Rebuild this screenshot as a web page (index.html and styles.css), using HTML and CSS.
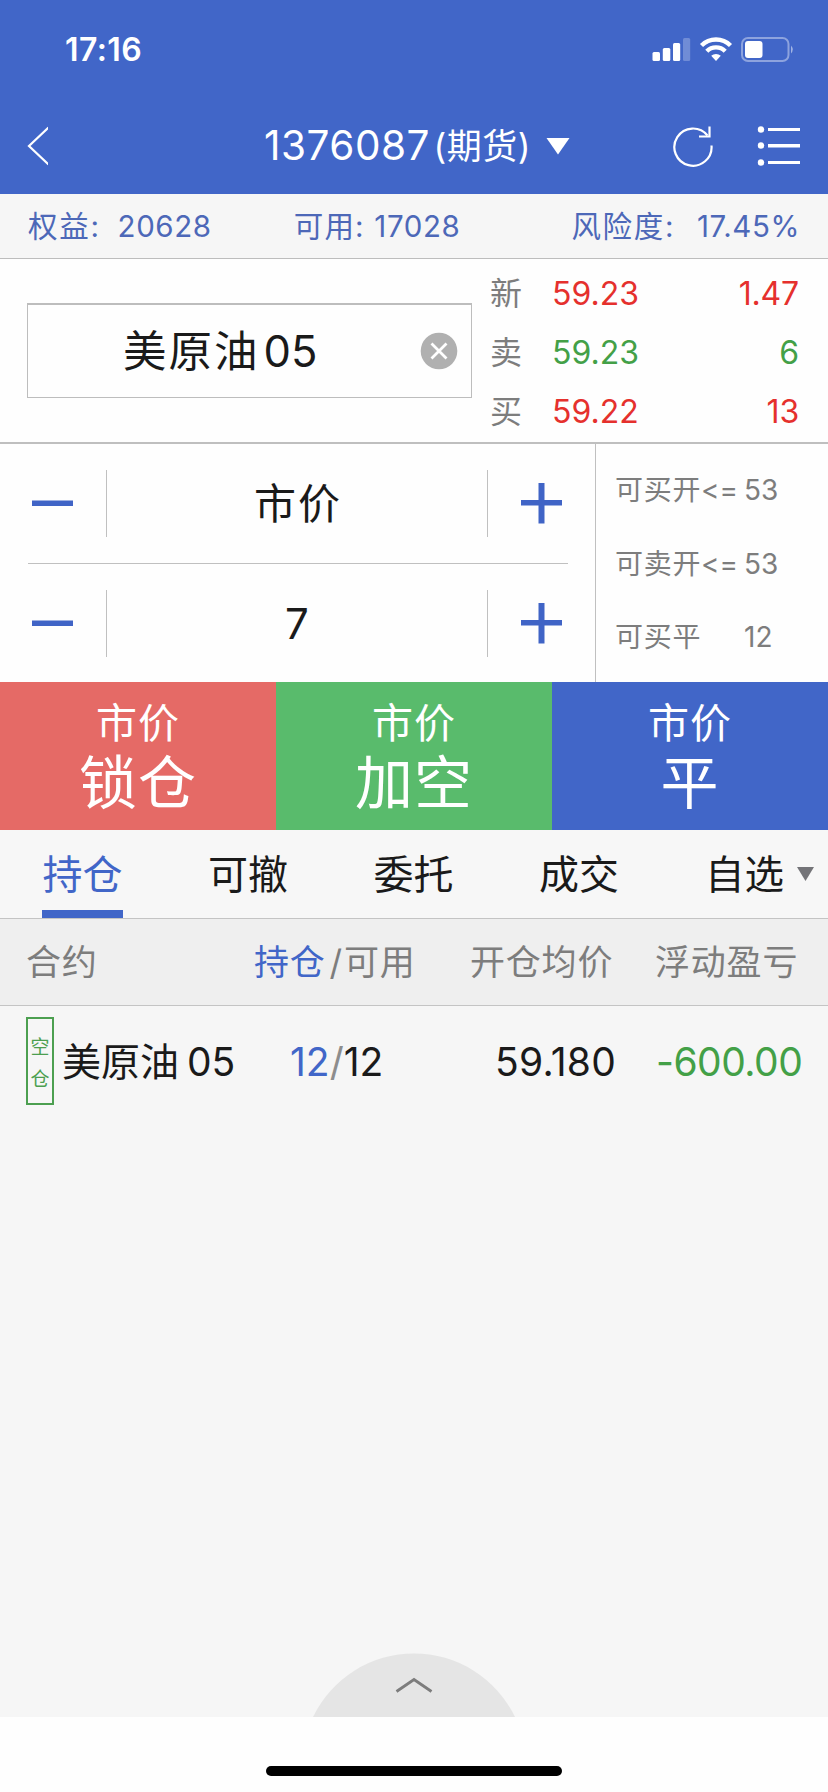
FILE: index.html
```html
<!DOCTYPE html>
<html lang="zh-CN">
<head>
<meta charset="utf-8">
<title>期货交易</title>
<link rel="stylesheet" href="styles.css">
</head>
<body>
<div class="app">
  <header class="header">
    <div class="status">
      <span class="clock">17:16</span>
      <svg class="status-icons" width="144" height="28" viewBox="0 0 144 28">
        <g fill="#fff">
          <rect x="2.5" y="16" width="7.5" height="9" rx="1.5"/>
          <rect x="12.8" y="12" width="7.5" height="13" rx="1.5"/>
          <rect x="23" y="7" width="7.2" height="18" rx="1.5"/>
          <rect x="33" y="2" width="7.2" height="23" rx="1.5" opacity=".25"/>
        </g>
        <g fill="none" stroke="#fff" stroke-width="4.4">
          <path d="M51.500 9.500A20.500 20.500 0 0 1 80.500 9.500"/>
          <path d="M56.800 15.200A13 13 0 0 1 75.200 15.200"/>
        </g>
        <path d="M61.200 19.800A7 7 0 0 1 70.800 19.800L66 25Z" fill="#fff"/>
        <rect x="92" y="2" width="46.500" height="23" rx="6" fill="none" stroke="#fff" stroke-opacity=".4" stroke-width="2"/>
        <rect x="95" y="5" width="17.500" height="17" rx="3" fill="#fff"/>
        <path d="M141 9.500Q144.500 13.500 141 17.500Z" fill="#fff" opacity=".5"/>
      </svg>
    </div>
    <div class="nav">
      <svg class="back" width="22" height="40" viewBox="0 0 22 40"><path d="M22.500 1.500L3 20L22.500 38.500" fill="none" stroke="#fff" stroke-width="2.200"/></svg>
      <div class="account"><span class="account-id">1376087</span><span class="account-type">(期货)</span></div>
      <svg class="caret" width="24" height="18" viewBox="0 0 24 18"><path d="M.5 1H23.500L12 17.500Z" fill="#fff"/></svg>
      <svg class="refresh" width="42" height="42" viewBox="0 0 42 42"><g fill="none" stroke="#fff" stroke-width="2.200"><path d="M39.500 20.500A18.600 18.600 0 1 1 35.500 10.500"/><path d="M37.500 1.500V11.500H27"/></g></svg>
      <svg class="list" width="44" height="42" viewBox="0 0 44 42"><g fill="#fff"><circle cx="5" cy="4.500" r="3.200"/><circle cx="5" cy="20.500" r="3.200"/><circle cx="5" cy="37.500" r="3.200"/><path d="M12 3H44V6H12zM12 19H44V22.500H12zM12 36H44V39H12z"/></g></svg>
    </div>
  </header>

  <section class="summary">
    <div class="equity"><span class="k">权益:</span><span class="v">20628</span></div>
    <div class="available"><span class="k">可用:</span><span class="v">17028</span></div>
    <div class="risk"><span class="k">风险度:</span><span class="v">17.45%</span></div>
  </section>

  <section class="quote">
    <div class="symbol">
      <span class="symbol-name"><span class="cn">美原油</span>05</span>
      <svg class="clear" width="38" height="38" viewBox="0 0 38 38"><circle cx="19" cy="19" r="18.300" fill="#b0b0b0"/><path d="M11.500 11.500L26.500 26.500M26.500 11.500L11.500 26.500" stroke="#fff" stroke-width="2.800"/></svg>
    </div>
    <div class="ticks">
      <span class="tick-label">新</span><span class="up">59.23</span><span class="vol up">1.47</span>
      <span class="tick-label">卖</span><span class="down">59.23</span><span class="vol down">6</span>
      <span class="tick-label">买</span><span class="up">59.22</span><span class="vol up">13</span>
    </div>
  </section>

  <section class="order">
    <div class="steppers">
      <div class="stepper">
        <svg class="minus" width="41" height="41" viewBox="0 0 41 41"><path d="M0 17.500H41V23H0z" fill="#4064c6"/></svg>
        <span class="value price-value">市价</span>
        <svg class="plus" width="41" height="41" viewBox="0 0 41 41"><path d="M0 17H41V22.500H0zM17.500 0H23.500V40.500H17.500z" fill="#4064c6"/></svg>
      </div>
      <div class="stepper">
        <svg class="minus" width="41" height="41" viewBox="0 0 41 41"><path d="M0 17.500H41V23H0z" fill="#4064c6"/></svg>
        <span class="value">7</span>
        <svg class="plus" width="41" height="41" viewBox="0 0 41 41"><path d="M0 17H41V22.500H0zM17.500 0H23.500V40.500H17.500z" fill="#4064c6"/></svg>
      </div>
    </div>
    <div class="limits">
      <div class="limit"><span class="cn">可买开</span><span class="op">&lt;=</span><span class="num">53</span></div>
      <div class="limit"><span class="cn">可卖开</span><span class="op">&lt;=</span><span class="num">53</span></div>
      <div class="limit"><span class="cn">可买平</span><span class="op"></span><span class="num">12</span></div>
    </div>
  </section>

  <section class="actions">
    <div class="action lock"><span class="action-price">市价</span><span class="action-name">锁仓</span></div>
    <div class="action short"><span class="action-price">市价</span><span class="action-name">加空</span></div>
    <div class="action close"><span class="action-price">市价</span><span class="action-name">平</span></div>
  </section>

  <nav class="tabs">
    <span class="tab active">持仓</span>
    <span class="tab">可撤</span>
    <span class="tab">委托</span>
    <span class="tab">成交</span>
    <span class="tab">自选</span>
    <svg class="tab-caret" width="17" height="14" viewBox="0 0 17 14"><path d="M0 0H17L8.500 14Z" fill="#747478"/></svg>
  </nav>

  <section class="head cols">
    <span class="c-name">合约</span>
    <span class="c-qty"><span class="blue">持仓</span><span class="slash">/</span>可用</span>
    <span class="c-avg">开仓均价</span>
    <span class="c-pnl">浮动盈亏</span>
  </section>

  <section class="positions">
    <div class="row cols">
      <span class="badge"><span>空</span><span>仓</span></span>
      <span class="c-name"><span class="cn">美原油</span>05</span>
      <span class="c-qty"><span class="blue">12</span><span class="slash">/</span>12</span>
      <span class="c-avg">59.180</span>
      <span class="c-pnl">-600.00</span>
    </div>
    <svg class="drawer" width="204" height="65" viewBox="0 0 204 65"><path d="M1 65A112 112 0 0 1 203 65Z" fill="#e5e5e5"/><path d="M84.500 39.500L102 27.500L119.500 39.500" fill="none" stroke="#7d7d7d" stroke-width="2.800"/></svg>
  </section>

  <footer class="home"><div class="home-bar"></div></footer>
</div>
</body>
</html>
```
FILE: styles.css
```css
* { box-sizing: border-box; }
body {
  margin: 0;
  background: #fefefe;
  color: #1a1a1a;
  font-family: Inter, "Noto Sans CJK SC", sans-serif;
  font-weight: 400;
}
svg { display: block; flex: none; }
span { white-space: nowrap; }
.app { width: 828px; height: 1792px; display: flex; flex-direction: column; overflow: hidden; }

.header { height: 194px; background: #4166c8; color: #fff; display: flex; flex-direction: column; }
.status { height: 97px; padding: 36px 34px 0 65px; display: flex; justify-content: space-between; }
.clock { font-size: 32px; font-weight: 600; line-height: 28px; letter-spacing: .4px; }
.nav { height: 97px; padding-left: 26px; display: flex; align-items: center; }
.account { width: 267px; margin-left: 216px; display: flex; justify-content: space-between; line-height: 60px; }
.account-id { font-size: 40.5px; letter-spacing: .5px; }
.account-type { font-size: 35px; letter-spacing: .5px; }
.caret { margin-left: 15px; }
.refresh { margin-left: 102px; }
.list { margin-left: 42px; }

.summary {
  height: 65px; border-bottom: 1px solid #bdbdbd; background: #f6f6f6; color: #4d68b8;
  padding: 0 28px; display: flex; line-height: 65px; font-size: 29.500px;
}
.summary > div { display: flex; justify-content: space-between; }
.equity { width: 184px; }
.available { width: 167px; margin-left: 82px; }
.risk { width: 229px; margin-left: 111px; }
.k { letter-spacing: 1.7px; }
.v { letter-spacing: .6px; }
.available .k { letter-spacing: 1.2px; }

.quote { height: 185px; border-bottom: 2px solid #bfbfbf; display: flex; padding-left: 27px; }
.symbol {
  width: 445px; height: 95px; margin-top: 44px; border: 1px solid #bdbdbd; border-top-width: 2px;
  display: flex; align-items: center; justify-content: space-between; padding: 0 13px 0 95px;
}
.symbol-name { font-size: 43.500px; line-height: 92px; }
.symbol-name .cn { letter-spacing: 2px; margin-right: 4px; }
.ticks {
  display: grid; grid-template-columns: 62px 120px 127px; grid-template-rows: repeat(3, 59px);
  padding: 5px 0 0 18px; line-height: 59px; font-size: 32px;
}
.tick-label { color: #7d7d7d; }
.vol { text-align: right; letter-spacing: -.2px; }
.up { color: #e5302d; }
.down { color: #43a047; }

.order { height: 238px; display: flex; }
.steppers { width: 596px; border-right: 1px solid #c0c0c0; padding: 0 27px 0 28px; }
.stepper { height: 119px; display: flex; align-items: center; padding: 0 6px 0 4px; }
.stepper:first-child { height: 120px; border-bottom: 1px solid #c0c0c0; }
.value {
  width: 383px; height: 67px; line-height: 67px; margin-left: 33px; text-align: center; font-size: 42px;
  border-left: 1px solid #c0c0c0; border-right: 1px solid #c0c0c0;
}
.price-value { letter-spacing: 2px; padding-left: 2px; }
.plus { margin-left: 33px; }
.limits { padding: 10px 0 0 19px; color: #7d7d7d; font-size: 28px; }
.limit { display: grid; grid-template-columns: 86px 43px 40px; height: 73.500px; line-height: 73.500px; }
.limit .cn { letter-spacing: .8px; }

.actions { height: 148px; display: grid; grid-template-columns: repeat(3, 1fr); color: #fff; }
.action { display: flex; flex-direction: column; align-items: center; padding-top: 13px; }
.action-price { font-size: 41px; line-height: 57px; letter-spacing: 1px; }
.action-name { font-size: 58px; line-height: 62px; letter-spacing: 1px; }
.lock { background: #e56a66; }
.short { background: #59bb6c; }
.close { background: #4166c8; }

.tabs { height: 89px; border-bottom: 1px solid #c4c4c4; background: #f7f7f7; display: flex; padding-left: 42px; }
.tab { width: 81px; margin-right: 84.500px; height: 88px; line-height: 90px; font-size: 40px; text-align: center; }
.tab:nth-child(5) { margin-right: 12px; font-size: 39.500px; }
.tab.active { color: #4166c8; border-bottom: 8px solid #4166c8; }
.tab-caret { margin-top: 37px; }

.cols { display: flex; }
.head {
  height: 87px; border-bottom: 1px solid #c4c4c4; background: #efefef; color: #7d7d7d;
  line-height: 87px; font-size: 35px; padding-left: 26px; letter-spacing: .8px;
}
.head .c-name { width: 228px; }
.head .c-qty { width: 216px; }
.head .c-avg { width: 185px; }
.blue { color: #4166c8; }
.head .slash { margin: 0 1px 0 4px; }

.positions { flex: 1; background: #f6f6f6; display: flex; flex-direction: column; justify-content: space-between; align-items: center; }
.row { width: 828px; height: 110px; line-height: 112px; font-size: 39px; padding-left: 26px; }
.badge {
  width: 28px; height: 88px; margin-top: 11px; border: 2px solid #4c9f50; color: #4c9f50; padding-top: 5px;
  display: flex; flex-direction: column; align-items: center; justify-content: center; font-size: 19px; line-height: 32px;
}
.row .c-name { width: 236px; padding-left: 8px; }
.row .cn { margin-right: 8px; }
.row .slash { color: #8d8d8d; }
.row .c-qty { width: 205px; }
.row .c-avg { width: 161px; letter-spacing: .3px; }
.row .c-pnl { color: #43a047; letter-spacing: -.5px; }

.home { height: 75px; display: flex; justify-content: center; padding-top: 49px; background: #fefefe; }
.home-bar { width: 296px; height: 10px; border-radius: 5px; background: #000; }
```
